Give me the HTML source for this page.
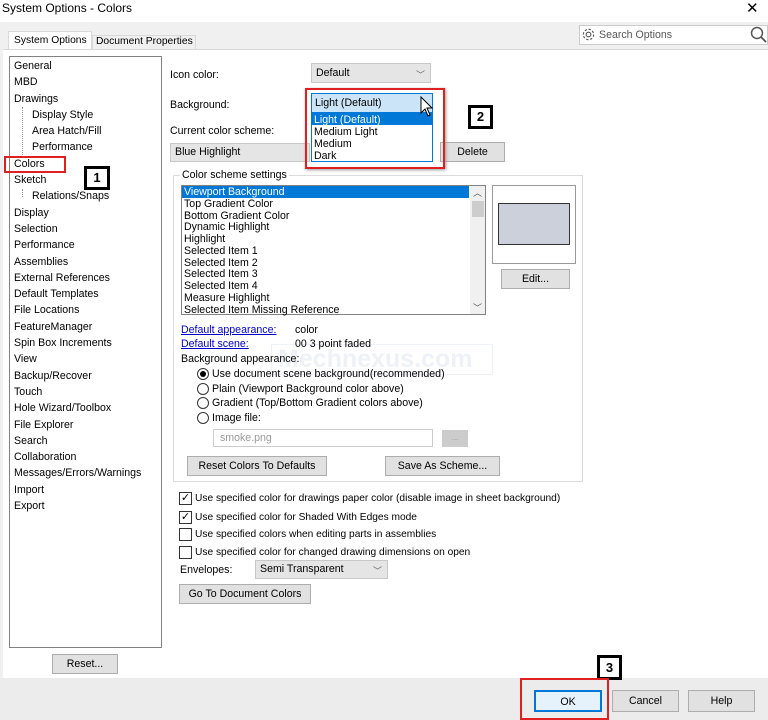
<!DOCTYPE html>
<html><head><style>
*{margin:0;padding:0;box-sizing:border-box}
body{width:768px;height:720px;background:#f0f0f0;font-family:"Liberation Sans",sans-serif;font-size:10.6px;color:#000;position:relative;overflow:hidden}
.a{position:absolute;white-space:nowrap}
.btn{position:absolute;background:#e1e1e1;border:1px solid #adadad;text-align:center}
.combo{position:absolute;background:#e5e5e5;border:1px solid #c8c8c8;padding-left:4px}
.chev{position:absolute;right:5px;top:2px;color:#666;font-size:9px}
.tree div{height:16.3px;line-height:16.3px}
.cb{position:absolute;width:13px;height:13px;border:1px solid #333;background:#fff;font-size:11px;line-height:11px;text-align:center}
.rd{position:absolute;width:12px;height:12px;border:1px solid #333;border-radius:50%;background:#fff}
.lnk{color:#00c;text-decoration:underline}
</style></head><body>
<div class="a" style="left:0;top:0;width:768px;height:22px;background:#fff"></div>
<div class="a" style="left:2px;top:1px;font-size:12px">System Options - Colors</div>
<div class="a" style="left:746px;top:-1px;font-size:15px">✕</div>
<div class="a" style="left:8px;top:31px;width:84px;height:19px;background:#fff;border:1px solid #d9d9d9;border-bottom:none"></div>
<div class="a" style="left:14px;top:35px;font-size:10.3px">System Options</div>
<div class="a" style="left:92px;top:35px;width:104px;height:14px;background:#f0f0f0;border:1px solid #d9d9d9;border-bottom:none"></div>
<div class="a" style="left:96px;top:36px;font-size:10.3px">Document Properties</div>
<div class="a" style="left:579px;top:25px;width:189px;height:20px;background:#fff;border:1px solid #ccc"></div>
<svg class="a" style="left:581px;top:27px" width="15" height="15" viewBox="0 0 16 16"><circle cx="8" cy="8" r="2.5" fill="none" stroke="#555" stroke-width="1.2"/><circle cx="8" cy="8" r="5.5" fill="none" stroke="#555" stroke-width="1.2" stroke-dasharray="2.5 1.8"/></svg>
<div class="a" style="left:599px;top:29px;color:#555">Search Options</div>
<svg class="a" style="left:750px;top:26px" width="17" height="17" viewBox="0 0 17 17"><circle cx="7" cy="7" r="5.5" fill="none" stroke="#555" stroke-width="1.5"/><line x1="11" y1="11" x2="16" y2="16" stroke="#555" stroke-width="1.8"/></svg>
<div class="a" style="left:3px;top:49px;width:765px;height:629px;background:#fff;border-top:1px solid #d9d9d9"></div>
<div class="a" style="left:0;top:678px;width:768px;height:42px;background:#ececec"></div>
<div class="a" style="left:9px;top:56px;width:153px;height:592px;border:1px solid #828282;background:#fff"></div>
<div class="a tree" style="left:14px;top:58px">
<div>General</div><div>MBD</div><div>Drawings</div>
<div style="padding-left:18px">Display Style</div><div style="padding-left:18px">Area Hatch/Fill</div><div style="padding-left:18px">Performance</div>
<div>Colors</div><div>Sketch</div><div style="padding-left:18px">Relations/Snaps</div>
<div>Display</div><div>Selection</div><div>Performance</div><div>Assemblies</div><div>External References</div><div>Default Templates</div><div>File Locations</div><div>FeatureManager</div><div>Spin Box Increments</div><div>View</div><div>Backup/Recover</div><div>Touch</div><div>Hole Wizard/Toolbox</div><div>File Explorer</div><div>Search</div><div>Collaboration</div><div>Messages/Errors/Warnings</div><div>Import</div><div>Export</div>
</div>
<div class="a" style="left:22px;top:107px;height:48px;border-left:1px dotted #999"></div>
<div class="a" style="left:22px;top:189px;height:8px;border-left:1px dotted #999"></div>
<div class="a" style="left:4px;top:156px;width:62px;height:17px;border:2px solid #e02020"></div>
<div class="a" style="left:84px;top:166px;width:26px;height:24px;border:3px solid #000;background:#fff;font-weight:bold;text-align:center;line-height:18px;font-size:13px">1</div>
<div class="btn" style="left:52px;top:654px;width:66px;height:20px;line-height:18px">Reset...</div>
<div class="a" style="left:170px;top:69px">Icon color:</div>
<div class="combo" style="left:311px;top:63px;width:120px;height:20px;line-height:18px">Default<span class="chev">﹀</span></div>
<div class="a" style="left:170px;top:99px">Background:</div>
<div class="a" style="left:170px;top:125px">Current color scheme:</div>
<div class="combo" style="left:170px;top:143px;width:140px;height:19px;line-height:17px">Blue Highlight</div>
<div class="btn" style="left:440px;top:142px;width:65px;height:20px;line-height:18px">Delete</div>
<div class="a" style="left:305px;top:88px;width:140px;height:81px;border:2px solid #e02020;box-shadow:1px 1px 3px #999"></div>
<div class="a" style="left:311px;top:93px;width:122px;height:20px;background:#cce4f7;border:1px solid #0078d7;padding-left:3px;line-height:19px">Light (Default)</div>
<div class="a" style="left:311px;top:112px;width:122px;height:50px;background:#fff;border:1px solid #0078d7"></div>
<div class="a" style="left:312px;top:113px;width:120px;height:12px;background:#0078d7"></div>
<div class="a" style="left:314px;top:114px;line-height:12px"><span style="color:#fff">Light (Default)</span><br>Medium Light<br>Medium<br>Dark</div>
<svg class="a" style="left:420px;top:96px" width="14" height="22" viewBox="0 0 14 22"><path d="M1 1 L1 17 L5 13 L8 20 L10 19 L7 12 L12 12 Z" fill="#fff" stroke="#000" stroke-width="1"/></svg>
<div class="a" style="left:468px;top:105px;width:25px;height:24px;border:3px solid #000;background:#fff;font-weight:bold;text-align:center;line-height:18px;font-size:13px">2</div>
<div class="a" style="left:173px;top:175px;width:410px;height:307px;border:1px solid #dcdcdc"></div>
<div class="a" style="left:180px;top:169px;background:#fff;padding:0 2px">Color scheme settings</div>
<div class="a" style="left:181px;top:185px;width:305px;height:130px;border:1px solid #828282;background:#fff;overflow:hidden"></div>
<div class="a" style="left:182px;top:186px;width:287px;height:12px;background:#0078d7"></div>
<div class="a" style="left:184px;top:187px;line-height:11.75px"><span style="color:#fff">Viewport Background</span><br>Top Gradient Color<br>Bottom Gradient Color<br>Dynamic Highlight<br>Highlight<br>Selected Item 1<br>Selected Item 2<br>Selected Item 3<br>Selected Item 4<br>Measure Highlight<br>Selected Item Missing Reference</div>
<div class="a" style="left:470px;top:186px;width:15px;height:128px;background:#f0f0f0"></div>
<div class="a" style="left:472px;top:201px;width:12px;height:16px;background:#cdcdcd"></div>
<div class="a" style="left:473px;top:186px;font-size:9px;color:#555">︿</div>
<div class="a" style="left:473px;top:301px;font-size:9px;color:#555">﹀</div>
<div class="a" style="left:492px;top:185px;width:84px;height:79px;border:1px solid #999;background:#fff"></div>
<div class="a" style="left:498px;top:203px;width:72px;height:42px;border:1px solid #333;background:#ccd0da"></div>
<div class="btn" style="left:501px;top:269px;width:69px;height:20px;line-height:18px">Edit...</div>
<div class="a" style="left:271px;top:344px;width:222px;height:31px;border:1px solid #eef2f8;color:#eef2f8;font-size:25px;font-weight:bold;line-height:29px;padding-left:6px">Mechnexus.com</div>
<div class="a lnk" style="left:181px;top:324px">Default appearance:</div>
<div class="a" style="left:295px;top:324px">color</div>
<div class="a lnk" style="left:181px;top:338px">Default scene:</div>
<div class="a" style="left:295px;top:338px">00 3 point faded</div>
<div class="a" style="left:181px;top:353px">Background appearance:</div>
<div class="rd" style="left:197px;top:368px"><div style="position:absolute;left:2px;top:2px;width:6px;height:6px;border-radius:50%;background:#000"></div></div>
<div class="a" style="left:212px;top:368px">Use document scene background(recommended)</div>
<div class="rd" style="left:197px;top:383px"></div><div class="a" style="left:212px;top:383px">Plain (Viewport Background color above)</div>
<div class="rd" style="left:197px;top:397px"></div><div class="a" style="left:212px;top:397px">Gradient (Top/Bottom Gradient colors above)</div>
<div class="rd" style="left:197px;top:412px"></div><div class="a" style="left:212px;top:412px">Image file:</div>
<div class="a" style="left:213px;top:429px;width:220px;height:18px;border:1px solid #ccc;color:#999;padding-left:6px;line-height:16px">smoke.png</div>
<div class="a" style="left:442px;top:430px;width:26px;height:17px;background:#ccc;color:#999;text-align:center;font-size:8px;line-height:15px">...</div>
<div class="btn" style="left:187px;top:456px;width:140px;height:20px;line-height:18px">Reset Colors To Defaults</div>
<div class="btn" style="left:385px;top:456px;width:115px;height:20px;line-height:18px">Save As Scheme...</div>
<div class="cb" style="left:179px;top:492px">✓</div><div class="a" style="left:195px;top:493px;font-size:10.2px">Use specified color for drawings paper color (disable image in sheet background)</div>
<div class="cb" style="left:179px;top:511px">✓</div><div class="a" style="left:195px;top:512px;font-size:10.2px">Use specified color for Shaded With Edges mode</div>
<div class="cb" style="left:179px;top:528px"></div><div class="a" style="left:195px;top:529px;font-size:10.2px">Use specified colors when editing parts in assemblies</div>
<div class="cb" style="left:179px;top:546px"></div><div class="a" style="left:195px;top:547px;font-size:10.2px">Use specified color for changed drawing dimensions on open</div>
<div class="a" style="left:180px;top:564px">Envelopes:</div>
<div class="combo" style="left:255px;top:560px;width:133px;height:19px;line-height:17px">Semi Transparent<span class="chev">﹀</span></div>
<div class="btn" style="left:179px;top:584px;width:132px;height:20px;line-height:18px">Go To Document Colors</div>
<div class="a" style="left:597px;top:655px;width:25px;height:25px;border:3px solid #000;background:#fff;font-weight:bold;text-align:center;line-height:19px;font-size:13px">3</div>
<div class="a" style="left:520px;top:678px;width:89px;height:42px;border:2px solid #e02020"></div>
<div class="btn" style="left:534px;top:690px;width:68px;height:22px;line-height:20px;border:2px solid #0078d7;background:#e5f1fb">OK</div>
<div class="btn" style="left:612px;top:690px;width:67px;height:22px;line-height:20px">Cancel</div>
<div class="btn" style="left:688px;top:690px;width:67px;height:22px;line-height:20px">Help</div>
</body></html>
